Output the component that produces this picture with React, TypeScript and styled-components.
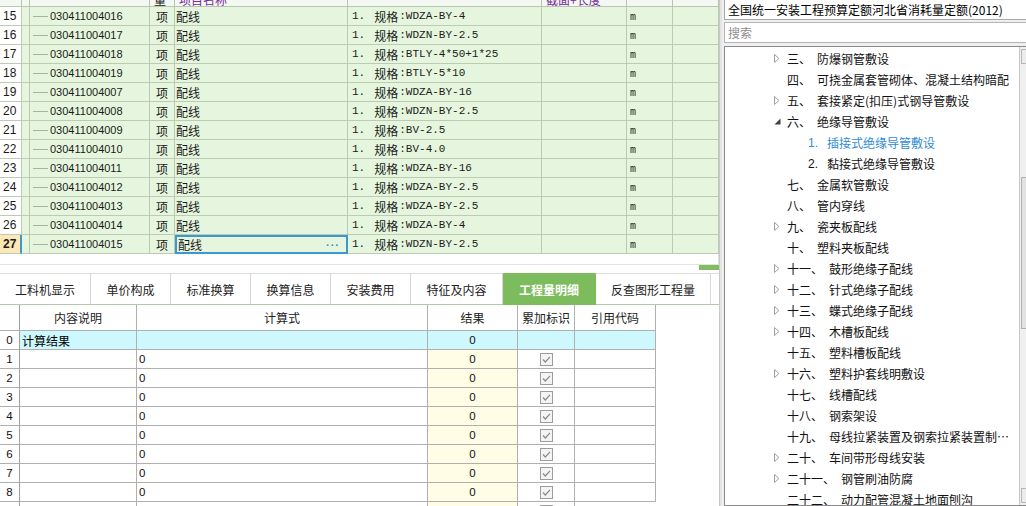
import React from 'react'
import styled, { createGlobalStyle, css } from 'styled-components'

const GlobalStyle = createGlobalStyle`
  html, body {
    margin: 0;
    padding: 0;
  }
  body {
    font-family: "Noto Sans CJK SC", "Liberation Sans", sans-serif;
    font-size: 12px;
    color: #000;
    background: #fff;
    overflow: hidden;
  }
  * {
    box-sizing: border-box;
  }
`

const Page = styled.div`
  display: flex;
  width: 1026px;
  height: 506px;
  overflow: hidden;
`

const LeftPane = styled.div`
  width: 719px;
  display: flex;
  flex-direction: column;
  flex-shrink: 0;
  overflow: hidden;
  & > * {
    flex-shrink: 0;
  }
`

const Splitter = styled.div`
  width: 3px;
  background: #e4e4e4;
  border-left: 1px solid #c8c8c8;
  flex-shrink: 0;
`

const RightPane = styled.div`
  flex: 1;
  display: flex;
  flex-direction: column;
  background: #f0f0f0;
  padding: 0 0 0 2px;
  gap: 2px;
  min-width: 0;
`

/* ---------- top list grid ---------- */

const TOP_COLS = '22px 8px 120px 25px 173px 194px 85px 46px 46px'

const TopGrid = styled.div`
  display: grid;
  grid-template-columns: ${TOP_COLS};
  grid-auto-rows: 19px;
  background: #e6f6de;
  border-right: 1px solid #b8c6b0;
`

const HeaderStrip = styled.div`
  display: grid;
  grid-template-columns: ${TOP_COLS};
  height: 7px;
  overflow: hidden;
  background: #f4f8f2;
  border-bottom: 1px solid #b8c6b0;
`

const HeadCell = styled.div<{ $purple?: boolean }>`
  display: flex;
  align-items: flex-end;
  border-right: 1px solid #b8c6b0;
  height: 6px;
  padding-left: 4px;
  font-size: 12px;
  line-height: 12px;
  color: ${p => (p.$purple ? '#7a2aa0' : '#222')};
  white-space: nowrap;
  overflow: hidden;
`

const Cell = styled.div<{ $sel?: boolean }>`
  border-right: 1px solid #bcccb4;
  border-bottom: 1px solid #bcccb4;
  display: flex;
  align-items: center;
  white-space: nowrap;
  overflow: hidden;
  position: relative;
  color: #1a1a1a;
  ${p =>
    p.$sel &&
    css`
      border: 2px solid #3a9ad0;
      padding-right: 6px;
    `}
`

const RowNo = styled(Cell)<{ $active?: boolean }>`
  background: ${p => (p.$active ? '#fde7b4' : '#fff')};
  font-family: "Liberation Sans", sans-serif;
  font-size: 12px;
  font-weight: ${p => (p.$active ? 700 : 400)};
  padding-left: 3px;
  border-right-color: ${p => (p.$active ? '#3a9ad0' : '#bcccb4')};
  border-right-width: ${p => (p.$active ? '2px' : '1px')};
`

const CodeCell = styled(Cell)`
  font-family: "Liberation Sans", sans-serif;
  font-size: 11px;
  padding-left: 20px;
  &::before {
    content: '';
    position: absolute;
    left: 3px;
    top: 9px;
    width: 15px;
    border-top: 1px solid #a8b4a0;
  }
`

const UnitCell = styled(Cell)`
  justify-content: center;
  font-size: 12px;
`

const NameCell = styled(Cell)`
  padding-left: 1px;
  font-size: 12px;
  justify-content: space-between;
`

const Dots = styled.span`
  color: #2e8fd0;
  font-family: "Liberation Sans", sans-serif;
  font-weight: 700;
  letter-spacing: 1px;
  font-size: 11px;
`

const SpecCell = styled(Cell)`
  padding-left: 4px;
  font-family: "Liberation Mono", "Noto Sans CJK SC", monospace;
  font-size: 11px;
  & b {
    font-weight: 400;
    font-family: "Noto Sans CJK SC", sans-serif;
    font-size: 12px;
    margin: 0 1px 0 9px;
  }
`

const MCell = styled(Cell)`
  padding: 3px 0 0 3px;
  font-family: "Liberation Mono", monospace;
  font-size: 10px;
`

/* ---------- scroll strip + tabs ---------- */

const GapArea = styled.div`
  height: 10px;
  background: #fff;
  border-right: 1px solid #e0e0e0;
`

const HScroll = styled.div`
  height: 6px;
  border-top: 1px solid #e2e6e0;
  display: flex;
  justify-content: flex-end;
  background: #fff;
`

const HThumb = styled.div`
  width: 20px;
  height: 5px;
  background: #7fbc62;
`

const TabBar = styled.div`
  margin-top: 3px;
  height: 32px;
  display: flex;
  border-top: 1px solid #dcdcdc;
  border-bottom: 1px solid #b4c8aa;
  background: #fff;
`

const Tab = styled.div<{ $w: number; $active?: boolean }>`
  width: ${p => p.$w}px;
  display: flex;
  align-items: center;
  justify-content: center;
  border-right: 1px solid #d8d8d8;
  font-size: 12px;
  color: #222;
  ${p =>
    p.$active &&
    css`
      background: #7dbc5d;
      color: #fff;
      font-weight: 700;
      margin-top: -1px;
      margin-bottom: -1px;
      border-right-color: #7dbc5d;
    `}
`

/* ---------- bottom detail table ---------- */

const BOT_COLS = '20px 117px 291px 90px 57px 81px'

const DetailTable = styled.div`
  display: grid;
  grid-template-columns: ${BOT_COLS};
  grid-template-rows: 26px;
  grid-auto-rows: 19px;
  width: 656px;
  border-right: 1px solid #a8a8a8;
`

const DCell = styled.div<{ $bg?: string; $align?: 'left' | 'center' }>`
  border-right: 1px solid #b0b0b0;
  border-bottom: 1px solid #b0b0b0;
  background: ${p => p.$bg || '#fff'};
  display: flex;
  align-items: center;
  justify-content: ${p => (p.$align === 'center' ? 'center' : 'flex-start')};
  padding-left: ${p => (p.$align === 'center' ? 0 : 2)}px;
  font-size: 12px;
  white-space: nowrap;
  overflow: hidden;
  &:last-child {
    border-right: none;
  }
`

const Num = styled.span`
  font-family: "Liberation Sans", sans-serif;
  font-size: 11.5px;
  color: #111;
`

const IdxCell = styled(DCell)`
  justify-content: center;
  padding-left: 0;
  border-right-color: #a0a0a0;
`

const HeadText = styled.span`
  font-size: 12px;
  color: #222;
`

const CheckBox = () => (
  <svg width="13" height="13" viewBox="0 0 13 13">
    <rect x="0.5" y="0.5" width="12" height="12" fill="#f4f4f4" stroke="#9c9c9c" />
    <path d="M3 6.5 L5.3 9 L10 3.8" fill="none" stroke="#8a8a8a" strokeWidth="1.2" />
  </svg>
)

/* ---------- right pane ---------- */

const TitleBox = styled.div`
  height: 20px;
  flex-shrink: 0;
  border: 1px solid #a8a8a8;
  border-top: none;
  border-right: none;
  background: #fff;
  padding-left: 3px;
  display: flex;
  align-items: center;
  font-size: 12px;
  white-space: nowrap;
  overflow: hidden;
`

const SearchBox = styled.div`
  height: 21px;
  flex-shrink: 0;
  border: 1px solid #b4b4b4;
  border-right: none;
  background: #fff;
  padding-left: 3px;
  display: flex;
  align-items: center;
  color: #8e8e8e;
  font-size: 12px;
`

const TreeBox = styled.div`
  flex: 1;
  margin-top: 1px;
  border: 1px solid #8a8a8a;
  border-right: none;
  background: #fff;
  display: flex;
  min-height: 0;
  overflow: hidden;
`

const TreeList = styled.div`
  flex: 1;
  padding-top: 1px;
  min-width: 0;
  overflow: hidden;
`

const VScroll = styled.div`
  width: 7px;
  border-left: 1px solid #c8c8c8;
  background: #f0f0f0;
  display: flex;
  flex-direction: column;
  justify-content: space-between;
  position: relative;
`

const ScrollBtn = styled.div`
  height: 15px;
  border: 1px solid #b8b8b8;
  border-right: none;
  background: #ececec;
  margin: 2px 0 2px 1px;
`

const ScrollThumb = styled.div`
  position: absolute;
  left: 1px;
  right: 0;
  top: 130px;
  height: 152px;
  border: 1px solid #b0b0b0;
  border-right: none;
  background: #e2e2e2;
`

const TreeRow = styled.div<{ $level: number; $selected?: boolean }>`
  height: 21px;
  display: flex;
  align-items: center;
  padding-left: ${p => (p.$level === 0 ? 49 : 70)}px;
  white-space: nowrap;
  font-size: 12px;
  color: ${p => (p.$selected ? '#2f8bd6' : '#111')};
`

const Expander = styled.span`
  width: 13px;
  flex-shrink: 0;
  display: flex;
  align-items: center;
`

const Label = styled.span<{ $sub?: boolean }>`
  flex-shrink: 0;
  margin-right: ${p => (p.$sub ? 9 : 6)}px;
  font-family: ${p => (p.$sub ? '"Liberation Sans", sans-serif' : 'inherit')};
`

const Title = styled.span`
  overflow: hidden;
  text-overflow: ellipsis;
  min-width: 0;
`

type Exp = 'none' | 'collapsed' | 'expanded'

const ExpIcon = ({ kind }: { kind: Exp }) => {
  if (kind === 'collapsed')
    return (
      <svg width="6" height="9" viewBox="0 0 6 9">
        <path d="M0.5 0.5 L5 4.5 L0.5 8.5 Z" fill="#fff" stroke="#a0a0a0" />
      </svg>
    )
  if (kind === 'expanded')
    return (
      <svg width="7" height="7" viewBox="0 0 7 7">
        <path d="M6.5 0.5 L6.5 6.5 L0.5 6.5 Z" fill="#404040" />
      </svg>
    )
  return null
}

const topRows = [
  ['15', '030411004016', 'WDZA-BY-4'],
  ['16', '030411004017', 'WDZN-BY-2.5'],
  ['17', '030411004018', 'BTLY-4*50+1*25'],
  ['18', '030411004019', 'BTLY-5*10'],
  ['19', '030411004007', 'WDZA-BY-16'],
  ['20', '030411004008', 'WDZN-BY-2.5'],
  ['21', '030411004009', 'BV-2.5'],
  ['22', '030411004010', 'BV-4.0'],
  ['23', '030411004011', 'WDZA-BY-16'],
  ['24', '030411004012', 'WDZA-BY-2.5'],
  ['25', '030411004013', 'WDZA-BY-2.5'],
  ['26', '030411004014', 'WDZA-BY-4'],
  ['27', '030411004015', 'WDZN-BY-2.5'],
]

const tabs: [string, number][] = [
  ['工料机显示', 91],
  ['单价构成', 80],
  ['标准换算', 80],
  ['换算信息', 80],
  ['安装费用', 80],
  ['特征及内容', 92],
  ['工程量明细', 93],
  ['反查图形工程量', 115],
]

const tree: { label: string; title: string; exp: Exp; level: number; selected?: boolean }[] = [
  { label: '三、', title: '防爆钢管敷设', exp: 'collapsed', level: 0 },
  { label: '四、', title: '可挠金属套管砌体、混凝土结构暗配', exp: 'none', level: 0 },
  { label: '五、', title: '套接紧定(扣压)式钢导管敷设', exp: 'collapsed', level: 0 },
  { label: '六、', title: '绝缘导管敷设', exp: 'expanded', level: 0 },
  { label: '1.', title: '插接式绝缘导管敷设', exp: 'none', level: 1, selected: true },
  { label: '2.', title: '黏接式绝缘导管敷设', exp: 'none', level: 1 },
  { label: '七、', title: '金属软管敷设', exp: 'none', level: 0 },
  { label: '八、', title: '管内穿线', exp: 'none', level: 0 },
  { label: '九、', title: '瓷夹板配线', exp: 'collapsed', level: 0 },
  { label: '十、', title: '塑料夹板配线', exp: 'none', level: 0 },
  { label: '十一、', title: '鼓形绝缘子配线', exp: 'collapsed', level: 0 },
  { label: '十二、', title: '针式绝缘子配线', exp: 'collapsed', level: 0 },
  { label: '十三、', title: '蝶式绝缘子配线', exp: 'collapsed', level: 0 },
  { label: '十四、', title: '木槽板配线', exp: 'collapsed', level: 0 },
  { label: '十五、', title: '塑料槽板配线', exp: 'none', level: 0 },
  { label: '十六、', title: '塑料护套线明敷设', exp: 'collapsed', level: 0 },
  { label: '十七、', title: '线槽配线', exp: 'none', level: 0 },
  { label: '十八、', title: '钢索架设', exp: 'none', level: 0 },
  { label: '十九、', title: '母线拉紧装置及钢索拉紧装置制作安装', exp: 'none', level: 0 },
  { label: '二十、', title: '车间带形母线安装', exp: 'collapsed', level: 0 },
  { label: '二十一、', title: '钢管刷油防腐', exp: 'collapsed', level: 0 },
  { label: '二十二、', title: '动力配管混凝土地面刨沟', exp: 'none', level: 0 },
]

export default function App() {
  return (
    <Page>
      <GlobalStyle />
      <LeftPane>
        <HeaderStrip>
          <HeadCell />
          <HeadCell />
          <HeadCell />
          <HeadCell>量</HeadCell>
          <HeadCell $purple>项目名称</HeadCell>
          <HeadCell />
          <HeadCell $purple>截面+长度</HeadCell>
          <HeadCell />
          <HeadCell />
        </HeaderStrip>
        <TopGrid>
          {topRows.map(([no, code, spec]) => {
            const active = no === '27'
            return (
              <React.Fragment key={no}>
                <RowNo $active={active}>{no}</RowNo>
                <Cell />
                <CodeCell>{code}</CodeCell>
                <UnitCell>项</UnitCell>
                <NameCell $sel={active}>
                  <span>配线</span>
                  {active && <Dots>···</Dots>}
                </NameCell>
                <SpecCell>
                  1.<b>规格</b>:{spec}
                </SpecCell>
                <Cell />
                <MCell>m</MCell>
                <Cell />
              </React.Fragment>
            )
          })}
        </TopGrid>
        <GapArea />
        <HScroll>
          <HThumb />
        </HScroll>
        <TabBar>
          {tabs.map(([name, w]) => (
            <Tab key={name} $w={w} $active={name === '工程量明细'}>
              {name}
            </Tab>
          ))}
        </TabBar>
        <DetailTable>
          <IdxCell />
          <DCell $align="center"><HeadText>内容说明</HeadText></DCell>
          <DCell $align="center"><HeadText>计算式</HeadText></DCell>
          <DCell $align="center"><HeadText>结果</HeadText></DCell>
          <DCell $align="center"><HeadText>累加标识</HeadText></DCell>
          <DCell $align="center"><HeadText>引用代码</HeadText></DCell>

          <IdxCell><Num>0</Num></IdxCell>
          <DCell $bg="#cdf8fd">计算结果</DCell>
          <DCell $bg="#cdf8fd" />
          <DCell $bg="#cdf8fd" $align="center"><Num>0</Num></DCell>
          <DCell $bg="#cdf8fd" />
          <DCell $bg="#cdf8fd" />

          {[1, 2, 3, 4, 5, 6, 7, 8, 9].map(i => (
            <React.Fragment key={i}>
              <IdxCell><Num>{i < 9 ? i : ''}</Num></IdxCell>
              <DCell />
              <DCell><Num>{i < 9 ? 0 : ''}</Num></DCell>
              <DCell $bg="#fffde6" $align="center"><Num>{i < 9 ? 0 : ''}</Num></DCell>
              <DCell $align="center"><CheckBox /></DCell>
              <DCell />
            </React.Fragment>
          ))}
        </DetailTable>
      </LeftPane>
      <Splitter />
      <RightPane>
        <TitleBox>全国统一安装工程预算定额河北省消耗量定额(2012)</TitleBox>
        <SearchBox>搜索</SearchBox>
        <TreeBox>
          <TreeList>
            {tree.map(t => (
              <TreeRow key={t.label + t.title} $level={t.level} $selected={t.selected}>
                <Expander>
                  <ExpIcon kind={t.exp} />
                </Expander>
                <Label $sub={t.level === 1}>{t.label}</Label>
                <Title>{t.title}</Title>
              </TreeRow>
            ))}
          </TreeList>
          <VScroll>
            <ScrollBtn />
            <ScrollThumb />
            <ScrollBtn />
          </VScroll>
        </TreeBox>
      </RightPane>
    </Page>
  )
}
